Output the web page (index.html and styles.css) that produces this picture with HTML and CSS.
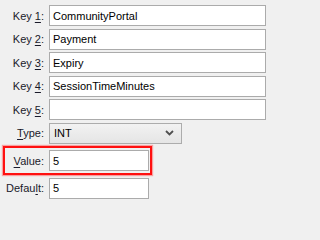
FILE: index.html
```html
<!DOCTYPE html>
<html>
<head>
<meta charset="utf-8">
<link rel="stylesheet" href="styles.css">
</head>
<body>
<div class="form">
  <div class="row"><label class="lbl">Key <u>1</u>:</label><div class="field wide">CommunityPortal</div></div>
  <div class="row"><label class="lbl">Key <u>2</u>:</label><div class="field wide">Payment</div></div>
  <div class="row"><label class="lbl">Key <u>3</u>:</label><div class="field wide">Expiry</div></div>
  <div class="row"><label class="lbl">Key <u>4</u>:</label><div class="field wide">SessionTimeMinutes</div></div>
  <div class="row"><label class="lbl">Key <u>5</u>:</label><div class="field wide"></div></div>
  <div class="row"><label class="lbl"><u>T</u>ype:</label>
    <div class="select"><span>INT</span>
      <svg class="chev" width="9" height="6" viewBox="0 0 9 6"><path d="M1 1 L4.5 4.5 L8 1" fill="none" stroke="#505050" stroke-width="1.8"/></svg>
    </div>
  </div>
  <div class="row highlight"><label class="lbl"><u>V</u>alue:</label><div class="field short">5</div></div>
  <div class="row last"><label class="lbl">Defau<u>l</u>t:</label><div class="field short">5</div></div>
</div>
</body>
</html>
```
FILE: styles.css
```css
html, body {
  margin: 0;
  padding: 0;
  background: #f0f0f0;
}
body {
  font-family: "Liberation Sans", Arial, sans-serif;
  font-size: 11px;
  color: #000;
  width: 271px;
  height: 202px;
  overflow: hidden;
}
.form {
  display: flex;
  flex-direction: column;
  gap: 2px;
  padding-top: 5px;
}
.row {
  display: flex;
  align-items: center;
  height: 21.5px;
}
.lbl {
  width: 49px;
  text-align: right;
  padding-right: 5px;
  box-sizing: border-box;
  color: #1a1a2a;
}
.lbl u {
  text-decoration-thickness: 1px;
  text-underline-offset: 2px;
}
.field {
  box-sizing: border-box;
  height: 21px;
  background: #fff;
  border: 1px solid #ababab;
  padding-left: 3px;
  display: flex;
  align-items: center;
}
.wide { width: 217px; }
.short { width: 100px; }
.select {
  box-sizing: border-box;
  width: 133px;
  height: 21px;
  border: 1px solid #acacac;
  background: linear-gradient(#f2f2f2, #e5e5e5);
  display: flex;
  align-items: center;
  justify-content: space-between;
  padding: 0 7px 0 4px;
}
.chev { display: block; }
.highlight {
  position: relative;
  margin-top: 4px;
  margin-bottom: 4px;
}
.highlight::before {
  content: "";
  position: absolute;
  left: 3px;
  top: -4px;
  width: 149px;
  height: 29px;
  box-sizing: border-box;
  border: 2px solid #ff1010;
  box-shadow: 0 0 1px 1px rgba(255,80,80,0.5);
  pointer-events: none;
}
```
